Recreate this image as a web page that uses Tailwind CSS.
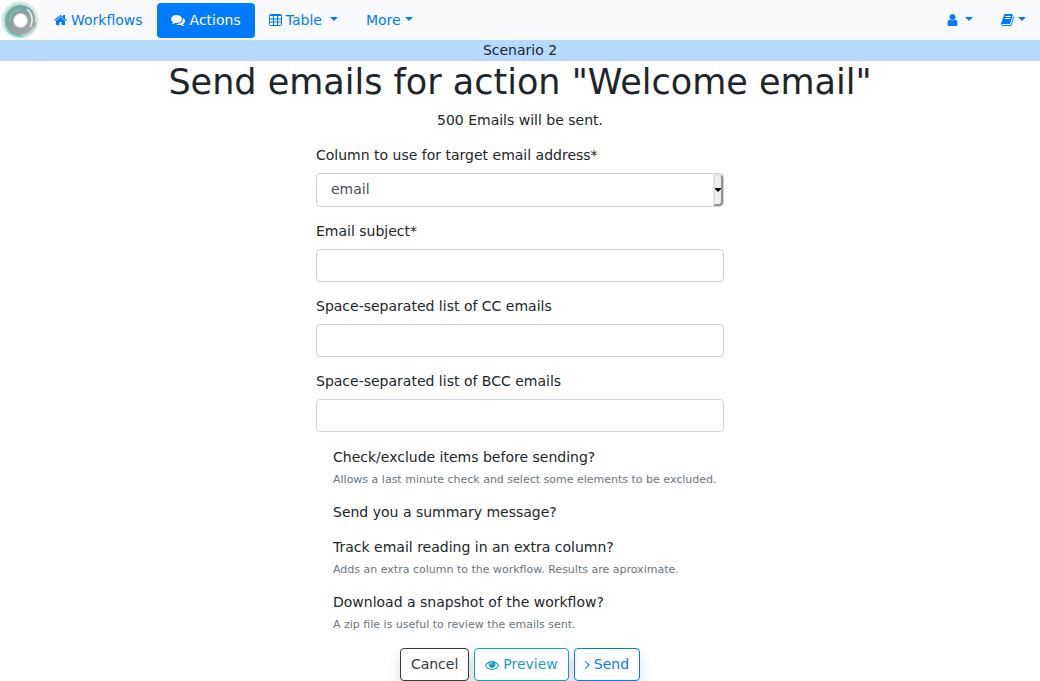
<!DOCTYPE html>
<html lang="en">
<head>
<meta charset="utf-8">
<meta name="viewport" content="width=device-width, initial-scale=1">
<title>Send emails</title>
<script src="https://cdn.jsdelivr.net/npm/@tailwindcss/browser@4"></script>
</head>
<body class="bg-white font-['DejaVu_Sans',sans-serif] text-[14px] leading-[21px] text-[#212529]">
<nav class="flex h-10 items-center bg-[#f8f9fa] text-[#007bff]" aria-label="Main">
  <a href="#" class="block size-10 bg-white" aria-label="Home">
    <svg class="size-10" viewBox="0 0 40 40" fill="none">
      <defs>
        <linearGradient id="ring" x1="0" y1="0" x2="1" y2="1"><stop offset="0" stop-color="#78a59f"/><stop offset=".5" stop-color="#8fa0a0"/><stop offset="1" stop-color="#a5abae"/></linearGradient>
        <radialGradient id="core"><stop offset=".72" stop-color="#fff"/><stop offset="1" stop-color="#fff" stop-opacity="0"/></radialGradient>
        <filter id="soft"><feGaussianBlur stdDeviation=".5"/></filter>
      </defs>
      <g filter="url(#soft)">
        <circle cx="20" cy="20" r="18" stroke="#e2f3f0" stroke-width="2"/>
        <circle cx="20" cy="20" r="16" stroke="#b5dcd5" stroke-width="2.500"/>
        <circle cx="20.500" cy="20.500" r="10.500" stroke="url(#ring)" stroke-width="10"/>
        <path d="M4 25C1 13 9 4 20 3.500" stroke="#c2e6df" stroke-width="1.500"/>
        <path d="M7 30c4 5 9 7 16 6" stroke="#6fd8c4" stroke-width="2"/>
        <path d="M7 23C5 14 11 7 20 7c6 0 10 3 12 7" stroke="#62b3a2" stroke-width="1.500"/>
        <path d="M10 22c-1-8 4-12 11-12" stroke="#a9c7c2" stroke-width="1"/>
        <path d="M27 9c5 4 7 12 3 18" stroke="#e6f8f5" stroke-width="1.500"/>
        <path d="M23 4c9 1 14 9 13 18" stroke="#d3e5e3" stroke-width="2"/>
        <path d="M34 27c-3 6-8 8-13 8" stroke="#c3cfcf" stroke-width="1.500"/>
      </g>
      <circle cx="20.500" cy="20.500" r="8" fill="url(#core)"/>
    </svg>
  </a>
  <a href="#" class="flex items-center gap-1 px-3.5 py-[7px]">
    <svg class="h-3.5 w-[13px]" viewBox="64 0 1664 1792" fill="currentColor"><path d="M1472 992v480q0 26-19 45t-45 19h-384v-384h-256v384h-384q-26 0-45-19t-19-45v-480q0-1 .5-3t.5-3l575-474 575 474q1 2 1 6zm223-69l-62 74q-8 9-21 11h-3q-13 0-21-7l-692-577-692 577q-12 8-24 7-13-2-21-11l-62-74q-8-10-7-23.500t11-21.500l719-599q32-26 76-26t76 26l244 204v-195q0-14 9-23t23-9h192q14 0 23 9t9 23v408l219 182q10 8 11 21.500t-7 23.500z"/></svg>
    Workflows</a>
  <a href="#" class="flex items-center gap-[5px] rounded bg-[#007bff] px-3.5 py-[7px] text-white">
    <svg class="size-3.5" viewBox="0 0 1792 1792" fill="currentColor"><path d="M1408 768q0 139-94 257t-256.500 186.500-353.500 68.500q-86 0-176-16-124 88-278 128-36 9-86 16h-3q-11 0-20.500-8t-11.500-21q-1-3-1-6.500t.5-6.500 2-6l2.500-5 3.500-5.500 4-5 4.500-5 4-4.500q5-6 23-25t26-29.500 22.500-29 25-38.500 20.500-44q-124-72-195-177t-71-224q0-139 94-257t256.500-186.500 353.500-68.500 353.500 68.500 256.500 186.500 94 257zm384 256q0 120-71 224.500t-195 176.500q10 24 20.500 44t25 38.500 22.500 29 26 29.500 23 25q1 1 4 4.500t4.500 5 4 5 3.500 5.500l2.500 5 2 6 .5 6.500-1 6.500q-3 14-13 22t-22 7q-50-7-86-16-154-40-278-128-90 16-176 16-271 0-472-132 58 4 88 4 161 0 309-45t264-129q125-92 192-212t67-254q0-77-23-152 129 71 204 178t75 230z"/></svg>
    Actions</a>
  <button type="button" class="flex items-center gap-1 px-3.5 py-[7px]">
    <svg class="h-3.5 w-[13px]" viewBox="0 0 13 14" fill="none" stroke="currentColor"><rect x=".5" y="1.500" width="12" height="11" rx="1"/><path d="M1 2.500h11M1 6h11M1 9h11M4.500 3v9M8.500 3v9"/></svg>
    Table
    <svg class="mb-0.5 ml-1 h-1 w-2" viewBox="0 0 8 4" fill="currentColor"><path d="M0 0h8L4 4z"/></svg></button>
  <button type="button" class="flex items-center gap-1 px-3.5 py-[7px]">More
    <svg class="mb-0.5 h-1 w-2" viewBox="0 0 8 4" fill="currentColor"><path d="M0 0h8L4 4z"/></svg></button>
  <button type="button" class="ml-auto flex items-center gap-[7px] px-3.5 py-[7px]" aria-label="User">
    <svg class="h-3.5 w-[11px]" viewBox="192 0 1408 1792" fill="currentColor"><path d="M1536 1399q0 109-62.500 187t-150.500 78h-854q-88 0-150.500-78t-62.500-187q0-85 8.500-160.500t31.500-152 58.500-131 94-89 134.500-34.500q131 128 313 128t313-128q76 0 134.500 34.500t94 89 58.500 131 31.500 152 8.500 160.500zm-256-887q0 159-112.500 271.500t-271.500 112.500-271.500-112.500-112.500-271.500 112.500-271.500 271.500-112.500 271.500 112.500 112.500 271.500z"/></svg>
    <svg class="mb-0.5 h-1 w-2" viewBox="0 0 8 4" fill="currentColor"><path d="M0 0h8L4 4z"/></svg></button>
  <button type="button" class="flex items-center gap-1 px-3.5 py-[7px]" aria-label="Documentation">
    <svg class="h-3.5 w-[13px]" viewBox="64 0 1664 1792" fill="currentColor"><path d="M1703 478q40 57 18 129l-275 906q-19 64-76.500 107.500t-122.500 43.500h-923q-77 0-148.500-53.500t-99.500-131.500q-24-67-2-127 0-4 3-27t4-37q1-8-3-21.500t-3-19.500q2-11 8-21t16.500-23.500 16.500-23.500q23-38 45-91.500t30-91.500q3-10 .5-30t-.5-28q3-11 17-28t17-23q21-36 42-92t25-90q1-9-2.500-32t.5-28q4-13 22-30.500t22-22.500q19-26 42.500-84.500t27.500-96.500q1-8-3-25.500t-2-26.500q2-8 9-18t18-23 17-21q8-12 16.500-30.500t15-35 16-36 19.500-32 26.500-23.500 36-11.500 47.500 5.500l-1 3q38-9 51-9h761q74 0 114 56t18 130l-274 906q-36 119-71.500 153.500t-128.500 34.500h-869q-27 0-38 15-11 16-1 43 24 70 144 70h923q29 0 56-15.500t35-41.500l300-987q7-22 5-57 38 15 59 43zm-1064 2q-4 13 2 22.500t20 9.500h608q13 0 25.500-9.500t16.500-22.500l21-64q4-13-2-22.500t-20-9.500h-608q-13 0-25.500 9.500t-16.500 22.500zm-83 256q-4 13 2 22.500t20 9.500h608q13 0 25.500-9.500t16.500-22.500l21-64q4-13-2-22.500t-20-9.500h-608q-13 0-25.500 9.500t-16.500 22.500z"/></svg>
    <svg class="mb-0.5 h-1 w-2" viewBox="0 0 8 4" fill="currentColor"><path d="M0 0h8L4 4z"/></svg></button>
</nav>
<div class="bg-[#b8daff] text-center">Scenario 2</div>
<main class="flex flex-col items-center">
  <h1 class="text-center text-[35px] leading-[42px]">Send emails for action "Welcome email"</h1>
  <p class="mt-[7px]">500 Emails will be sent.</p>
  <form class="mt-3.5 flex w-full max-w-[408px] flex-col gap-[15px]">
    <div class="flex flex-col gap-3.5">
      <div class="flex flex-col gap-[7px]">
        <label for="column">Column to use for target email address*</label>
        <div class="relative">
          <select id="column" class="block h-[34px] w-full appearance-none rounded border border-[#ced4da] bg-white px-3.5 pb-0.5 text-[#495057]"><option>email</option></select>
          <span class="pointer-events-none absolute inset-y-px right-px flex w-2.5 items-center justify-center rounded-r-sm border-2 border-t-[#e3e3e3] border-r-[#8f8f8f] border-b-[#8f8f8f] border-l-[#e3e3e3] bg-[#efefef]">
            <svg class="h-1 w-1.5 shrink-0 text-black" viewBox="0 0 6 4" fill="currentColor"><path d="M0 0h6v1L3 4 0 1z"/></svg>
          </span>
        </div>
      </div>
      <div class="flex flex-col gap-[7px]">
        <label for="subject">Email subject*</label>
        <input id="subject" type="text" class="h-[33px] w-full rounded border border-[#ced4da] px-2.5 text-[#495057]">
      </div>
      <div class="flex flex-col gap-[7px]">
        <label for="cc">Space-separated list of CC emails</label>
        <input id="cc" type="text" class="h-[33px] w-full rounded border border-[#ced4da] px-2.5 text-[#495057]">
      </div>
      <div class="flex flex-col gap-[7px]">
        <label for="bcc">Space-separated list of BCC emails</label>
        <input id="bcc" type="text" class="h-[33px] w-full rounded border border-[#ced4da] px-2.5 text-[#495057]">
      </div>
    </div>
    <div class="flex flex-col gap-3.5">
      <div class="grid grid-cols-[14px_auto] gap-x-[3px] gap-y-1">
        <input id="check" type="checkbox" class="appearance-none">
        <label for="check">Check/exclude items before sending?</label>
        <small class="col-start-2 text-[11px] leading-4 whitespace-nowrap text-[#6c757d]">Allows a last minute check and select some elements to be excluded.</small>
      </div>
      <div class="grid grid-cols-[14px_auto] gap-x-[3px] gap-y-1">
        <input id="summary" type="checkbox" class="appearance-none">
        <label for="summary">Send you a summary message?</label>
      </div>
      <div class="grid grid-cols-[14px_auto] gap-x-[3px] gap-y-1">
        <input id="track" type="checkbox" class="appearance-none">
        <label for="track">Track email reading in an extra column?</label>
        <small class="col-start-2 text-[11px] leading-4 whitespace-nowrap text-[#6c757d]">Adds an extra column to the workflow. Results are aproximate.</small>
      </div>
      <div class="grid grid-cols-[14px_auto] gap-x-[3px] gap-y-1">
        <input id="snapshot" type="checkbox" class="appearance-none">
        <label for="snapshot">Download a snapshot of the workflow?</label>
        <small class="col-start-2 text-[11px] leading-4 whitespace-nowrap text-[#6c757d]">A zip file is useful to review the emails sent.</small>
      </div>
    </div>
    <div class="flex justify-center gap-[5px]">
      <button type="button" class="flex h-[33px] items-center rounded border border-[#343a40] bg-white px-2.5 text-[#343a40] shadow-[0_7px_14px_rgba(0,0,0,0.15)]">Cancel</button>
      <button type="button" class="flex h-[33px] items-center gap-1 rounded border border-[#17a2b8] bg-white px-2.5 text-[#17a2b8] shadow-[0_7px_14px_rgba(0,0,0,0.15)]">
        <svg class="size-3.5" viewBox="0 0 1792 1792" fill="currentColor"><path d="M1664 960q-152-236-381-353 61 104 61 225 0 185-131.500 316.500t-316.500 131.500-316.500-131.500-131.500-316.500q0-121 61-225-229 117-381 353 133 205 333.500 326.500t434.500 121.500 434.500-121.500 333.500-326.500zm-720-384q0-20-14-34t-34-14q-125 0-214.500 89.500t-89.500 214.500q0 20 14 34t34 14 34-14 14-34q0-86 61-147t147-61q20 0 34-14t14-34zm848 384q0 34-20 69-140 230-376.500 368.500t-499.500 138.500-499.500-139-376.500-368q-20-35-20-69t20-69q140-229 376.500-368t499.500-139 499.500 139 376.500 368q20 35 20 69z"/></svg>
        Preview</button>
      <button type="submit" class="flex h-[33px] items-center gap-1 rounded border border-[#007bff] bg-white px-2.5 text-[#007bff] shadow-[0_7px_14px_rgba(0,0,0,0.15)]">
        <svg class="h-3.5 w-[5px]" viewBox="576 64 640 1792" fill="currentColor"><path d="M1171 960q0 13-10 23l-466 466q-10 10-23 10t-23-10l-50-50q-10-10-10-23t10-23l393-393-393-393q-10-10-10-23t10-23l50-50q10-10 23-10t23 10l466 466q10 10 10 23z"/></svg>
        Send</button>
    </div>
  </form>
</main>
</body>
</html>
